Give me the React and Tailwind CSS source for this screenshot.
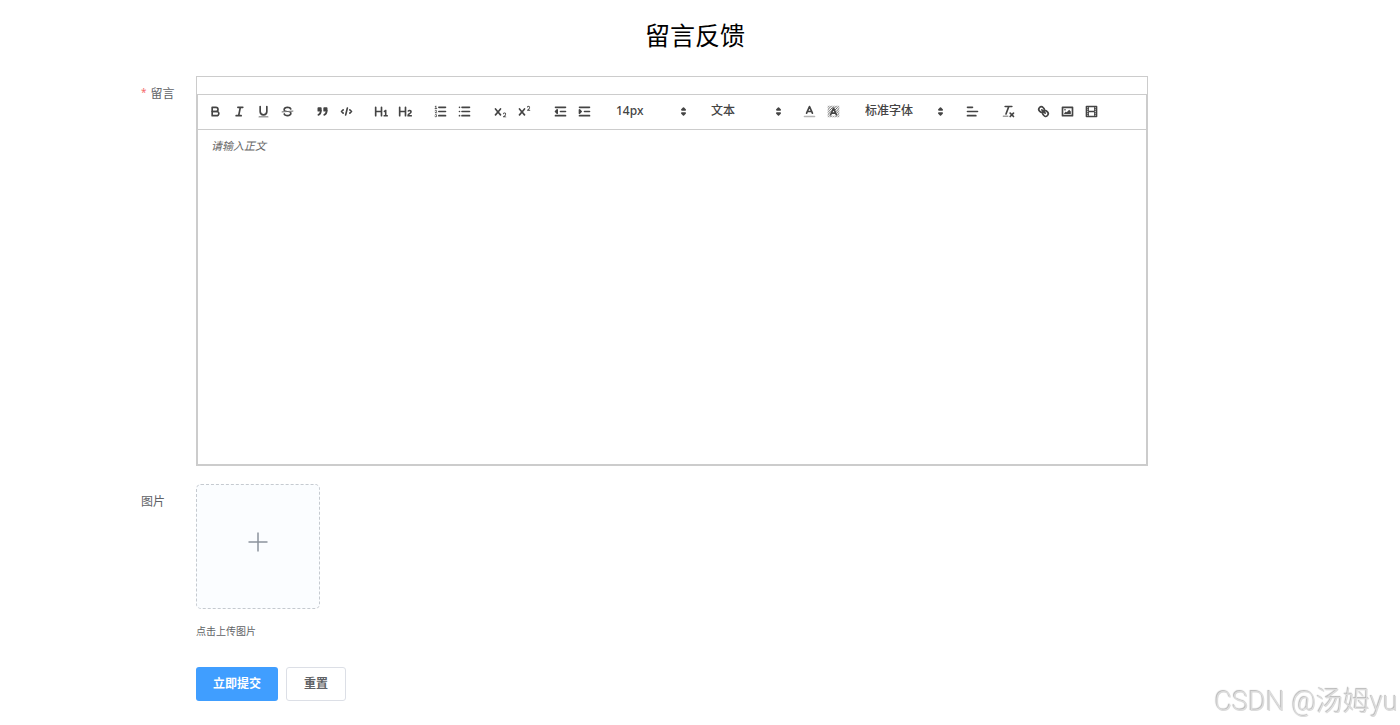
import React from "react";

const X_PATH =
  "M9.65,5.241a1,1,0,0,0-1.409.108L6,7.964,3.759,5.349A1,1,0,0,0,2.192,6.59178Q2.21541,6.6213,2.241,6.649L4.684,9.5,2.241,12.35A1,1,0,0,0,3.71,13.70722q0.02557-.02768.049-0.05722L6,11.036,8.241,13.65a1,1,0,1,0,1.567-1.24277Q9.78459,12.3777,9.759,12.35L7.316,9.5,9.759,6.651A1,1,0,0,0,9.65,5.241Z";

const fill = { fill: "currentColor", stroke: "none" };
const solid = { fill: "currentColor" };

const icons = {
  bold: (
    <>
      <path d="M5,4H9.5A2.5,2.5,0,0,1,12,6.5v0A2.5,2.5,0,0,1,9.5,9H5V4Z" />
      <path d="M5,9h5.5A2.5,2.5,0,0,1,13,11.5v0A2.5,2.5,0,0,1,10.5,14H5V9Z" />
    </>
  ),
  italic: <path d="M7,4H13M5,14H11M8,14L10,4" />,
  underline: (
    <>
      <path d="M5,3V9a4.012,4.012,0,0,0,4,4H9a4.012,4.012,0,0,0,4-4V3" />
      <rect {...fill} height="1" rx="0.5" width="12" x="3" y="15" />
    </>
  ),
  strike: (
    <>
      <path strokeWidth="1" d="M15.5,8.5L2.5,9.5" />
      <path {...fill} d="M9.007,8C6.542,7.791,6,7.519,6,6.5,6,5.792,7.283,5,9,5c1.571,0,2.765.679,2.969,1.309a1,1,0,0,0,1.9-.617C13.356,4.106,11.354,3,9,3,6.2,3,4,4.538,4,6.5a3.2,3.2,0,0,0,.5,1.843Z" />
      <path {...fill} d="M8.984,10C11.457,10.208,12,10.479,12,11.5c0,0.708-1.283,1.5-3,1.5-1.571,0-2.765-.679-2.969-1.309a1,1,0,1,0-1.9.617C4.644,13.894,6.646,15,9,15c2.8,0,5-1.538,5-3.5a3.2,3.2,0,0,0-.5-1.843Z" />
    </>
  ),
  quote: (
    <>
      <rect {...solid} height="3" width="3" x="4" y="5" />
      <rect {...solid} height="3" width="3" x="11" y="5" />
      <path {...solid} d="M7,8c0,4.031-3,5-3,5" />
      <path {...solid} d="M14,8c0,4.031-3,5-3,5" />
    </>
  ),
  code: <path d="M5,7L3,9L5,11M13,7L15,9L13,11M10,5L8,13" />,
  h1: (
    <path {...fill} d="M10,4V14a1,1,0,0,1-2,0V10H3v4a1,1,0,0,1-2,0V4A1,1,0,0,1,3,4V8H8V4a1,1,0,0,1,2,0Zm6.06787,9.209H14.98975V7.59863a.54085.54085,0,0,0-.605-.60547h-.62744a1.01119,1.01119,0,0,0-.748.29688L11.645,8.56641a.5435.5435,0,0,0-.022.8584l.28613.30762a.53861.53861,0,0,0,.84717.0332l.09912-.08789a1.2137,1.2137,0,0,0,.2417-.35254h.02246s-.01123.30859-.01123.60547V13.209H12.041a.54085.54085,0,0,0-.605.60547v.43945a.54085.54085,0,0,0,.605.60547h4.02686a.54085.54085,0,0,0,.605-.60547v-.43945A.54085.54085,0,0,0,16.06787,13.209Z" />
  ),
  h2: (
    <path {...fill} d="M16.73975,13.81445v.43945a.54085.54085,0,0,1-.605.60547H11.855a.58392.58392,0,0,1-.64893-.60547V14.0127c0-2.90527,3.39941-3.42187,3.39941-4.55469a.77675.77675,0,0,0-.84717-.78125,1.17684,1.17684,0,0,0-.83594.38477c-.2749.26367-.561.374-.85791.13184l-.4292-.34082c-.30811-.24219-.38525-.51758-.1543-.81445a2.97155,2.97155,0,0,1,2.45361-1.17676,2.45393,2.45393,0,0,1,2.68408,2.40918c0,2.45312-3.1792,2.92676-3.27832,3.93848h2.79443A.54085.54085,0,0,1,16.73975,13.81445ZM9,3A.99974.99974,0,0,0,8,4V8H3V4A1,1,0,0,0,1,4V14a1,1,0,0,0,2,0V10H8v4a1,1,0,0,0,2,0V4A.99974.99974,0,0,0,9,3Z" />
  ),
  ordered: (
    <>
      <path d="M7,4H15M7,9H15M7,14H15" />
      <path strokeWidth="1" d="M2.5,5.5H4.5M4.5,10.5h-2c0-.234,1.85-1.076,1.85-2.234A0.959,0.959,0,0,0,2.5,8.156M2.5,14.846a0.959,0.959,0,0,0,1.85-.109A0.7,0.7,0,0,0,3.75,14a0.688,0.688,0,0,0,.6-0.736,0.959,0.959,0,0,0-1.85-.109" />
      <path {...fill} d="M3.5,6A0.5,0.5,0,0,1,3,5.5V3.085l-0.276.138A0.5,0.5,0,0,1,2.053,3c-0.124-.247-0.023-0.324.224-0.447l1-.5A0.5,0.5,0,0,1,4,2.5v3A0.5,0.5,0,0,1,3.5,6Z" />
    </>
  ),
  bullet: <path d="M6,4H15M6,9H15M6,14H15M3,4H3M3,9H3M3,14H3" />,
  sub: (
    <>
      <path {...fill} d="M15.5,15H13.861a3.858,3.858,0,0,0,1.914-2.975,1.8,1.8,0,0,0-1.6-1.751A1.921,1.921,0,0,0,12.021,11.7a0.50013,0.50013,0,1,0,.957.291h0a0.914,0.914,0,0,1,1.053-.725,0.81,0.81,0,0,1,.744.762c0,1.076-1.16971,1.86982-1.93971,2.43082A1.45639,1.45639,0,0,0,12,15.5a0.5,0.5,0,0,0,.5.5h3A0.5,0.5,0,0,0,15.5,15Z" />
      <path {...fill} d={X_PATH} />
    </>
  ),
  sup: (
    <>
      <path {...fill} d="M15.5,7H13.861a4.015,4.015,0,0,0,1.914-2.975,1.8,1.8,0,0,0-1.6-1.751A1.922,1.922,0,0,0,12.021,3.7a0.5,0.5,0,1,0,.957.291,0.917,0.917,0,0,1,1.053-.725,0.81,0.81,0,0,1,.744.762c0,1.077-1.164,1.925-1.934,2.486A1.423,1.423,0,0,0,12,7.5a0.5,0.5,0,0,0,.5.5h3A0.5,0.5,0,0,0,15.5,7Z" />
      <path {...fill} d={X_PATH} />
    </>
  ),
  outdent: (
    <>
      <path d="M3,14H15M3,4H15M9,9H15" />
      <path {...solid} d="M5,7V11L3,9Z" />
    </>
  ),
  indent: (
    <>
      <path d="M3,14H15M3,4H15M9,9H15" />
      <path {...solid} d="M3,7V11L5,9Z" />
    </>
  ),
  color: (
    <>
      <path opacity="0.4" d="M3,15H15" />
      <path d="M5.5,11L9,3L12.5,11M6.38,9H11.63" />
    </>
  ),
  background: (
    <>
      <defs>
        <pattern id="hatch" width="3" height="3" patternUnits="userSpaceOnUse">
          <path strokeWidth="1" d="M0,3L3,0M-1,1L1,-1M2,4L4,2" />
        </pattern>
      </defs>
      <path fill="url(#hatch)" stroke="none" fillRule="evenodd" d="M2,2H16V16H2ZM9,3L4,14H14Z" />
      <path d="M5.5,13L9,5L12.5,13M6.38,11H11.63" />
    </>
  ),
  align: <path d="M3,9H15M3,14H13M3,4H9" />,
  clean: (
    <>
      <path d="M5,3H13M6,12L9.35,3M11,11L15,15M15,11L11,15" />
      <rect {...fill} height="1" rx="0.5" width="7" x="2" y="14" />
    </>
  ),
  link: (
    <>
      <path d="M7,7L11,11" />
      <path d="M8.9,4.577a3.476,3.476,0,0,1,.36,4.679A3.476,3.476,0,0,1,4.577,8.9C3.185,7.5,2.035,6.4,4.217,4.217S7.5,3.185,8.9,4.577Z" />
      <path d="M13.423,9.1a3.476,3.476,0,0,0-4.679-.36,3.476,3.476,0,0,0,.36,4.679c1.392,1.392,2.5,2.542,4.679.36S14.815,10.5,13.423,9.1Z" />
    </>
  ),
  image: (
    <>
      <rect height="10" width="12" x="3" y="4" />
      <circle {...fill} cx="6" cy="7" r="1" />
      <path {...fill} d="M5,12V11L7,9L8,10L11,7L13,9V12Z" />
    </>
  ),
  video: (
    <>
      <rect height="12" width="12" x="3" y="3" />
      <path {...fill} d="M5,3h1v12h-1zM12,3h1v12h-1zM5,8h8v2h-8zM3,5h3v1h-3zM3,7h3v1h-3zM3,10h3v1h-3zM3,12h3v1h-3zM12,5h3v1h-3zM12,7h3v1h-3zM12,10h3v1h-3zM12,12h3v1h-3z" />
    </>
  ),
  arrows: <path {...solid} d="M7,11L9,13L11,11ZM7,7L9,5L11,7Z" />,
};

function Icon({ name }) {
  return (
    <svg
      viewBox="0 0 18 18"
      className="size-[15px]"
      fill="none"
      stroke="currentColor"
      strokeWidth="2"
      strokeLinecap="round"
      strokeLinejoin="round"
      aria-hidden="true"
    >
      {icons[name]}
    </svg>
  );
}

function Tools({ items }) {
  return (
    <div className="flex">
      {items.map(([name, label]) => (
        <button key={name} type="button" aria-label={label} className="flex h-5 w-6 items-center justify-center hover:text-[#0066cc]">
          <Icon name={name} />
        </button>
      ))}
    </div>
  );
}

function Picker({ label, options, width }) {
  return (
    <div className={`relative flex h-5 items-center ${width}`}>
      <select aria-label={label} className="h-5 w-full appearance-none bg-transparent pl-[9px] pr-4 text-[12px] leading-5 font-medium outline-none">
        {options.map((o) => (
          <option key={o}>{o}</option>
        ))}
      </select>
      <span className="pointer-events-none absolute right-0">
        <Icon name="arrows" />
      </span>
    </div>
  );
}

export default function App() {
  return (
    <div className="bg-white font-['Noto_Sans','Noto_Sans_CJK_SC',sans-serif] text-[#606266]">
      <main className="pt-[17px] pr-[151px] pl-[141px]">
        <h1 className="text-center text-[25px] leading-9 text-black">留言反馈</h1>

        <form className="mt-[23px] pr-[101px] text-[12px]" onSubmit={(e) => e.preventDefault()}>
          <div className="flex">
            <label htmlFor="message" className="flex w-[55px] shrink-0 gap-1 leading-9">
              <span className="text-[10px] leading-8 text-[#f56c6c]">*</span>留言
            </label>
            <div className="min-w-0 flex-1 border border-[#ccc] pt-[17px]">
              <div className="flex h-9 items-center gap-[11px] border border-[#ccc] px-[5px] pb-0.5 text-[#444]">
                <Tools items={[["bold", "加粗"], ["italic", "斜体"], ["underline", "下划线"], ["strike", "删除线"]]} />
                <Tools items={[["quote", "引用"], ["code", "代码"]]} />
                <Tools items={[["h1", "一级标题"], ["h2", "二级标题"]]} />
                <Tools items={[["ordered", "有序列表"], ["bullet", "无序列表"]]} />
                <div className="px-px">
                  <Tools items={[["sub", "下标"], ["sup", "上标"]]} />
                </div>
                <Tools items={[["outdent", "减少缩进"], ["indent", "增加缩进"]]} />
                <Picker label="字号" options={["14px", "16px", "18px"]} width="w-[84px]" />
                <Picker label="标题" options={["文本", "标题1", "标题2"]} width="w-[84px]" />
                <Tools items={[["color", "文字颜色"], ["background", "背景颜色"]]} />
                <Picker label="字体" options={["标准字体", "衬线字体", "等宽字体"]} width="w-[92px]" />
                <div className="px-px">
                  <Tools items={[["align", "对齐"]]} />
                </div>
                <Tools items={[["clean", "清除格式"]]} />
                <Tools items={[["link", "链接"], ["image", "图片"], ["video", "视频"]]} />
              </div>
              <textarea
                id="message"
                placeholder="请输入正文"
                className="block h-[335px] w-full resize-none border border-t-0 border-[#ccc] px-[13px] py-[7px] text-[11px] leading-[18px] outline-none placeholder:text-[#666] placeholder:italic"
              />
            </div>
          </div>

          <div className="mt-[18px] flex">
            <label htmlFor="picture" className="w-[55px] shrink-0 leading-9">图片</label>
            <div>
              <label className="flex h-[125px] w-[124px] cursor-pointer items-center justify-center rounded-[5px] border border-dashed border-[#c5cad0] bg-[#fbfdff] pb-2.5">
                <input id="picture" type="file" accept="image/*" aria-label="点击上传图片" className="sr-only" />
                <svg viewBox="0 0 20 20" className="size-5" stroke="#8c939d" strokeWidth="1.5" aria-hidden="true">
                  <path d="M10,0.5V19.5M0.5,10H19.5" />
                </svg>
              </label>
              <p className="mt-[13px] text-[10px] leading-[18px]">点击上传图片</p>
            </div>
          </div>

          <div className="mt-[27px] flex gap-2 pl-[55px] font-bold">
            <button type="submit" className="h-[34px] rounded-[3px] bg-[#409eff] px-[17px] text-white">立即提交</button>
            <button type="reset" className="h-[34px] rounded-[3px] border border-[#dcdfe6] bg-white px-[17px]">重置</button>
          </div>
        </form>
      </main>

      <div className="pointer-events-none fixed right-0.5 bottom-[5px] font-['Roboto','Noto_Sans_CJK_SC',sans-serif] text-[27px] leading-9 font-light text-[#dcdcdc] [text-shadow:-1px_-1px_1px_#b5b5b5]">
        CSDN @汤姆yu
      </div>
    </div>
  );
}
